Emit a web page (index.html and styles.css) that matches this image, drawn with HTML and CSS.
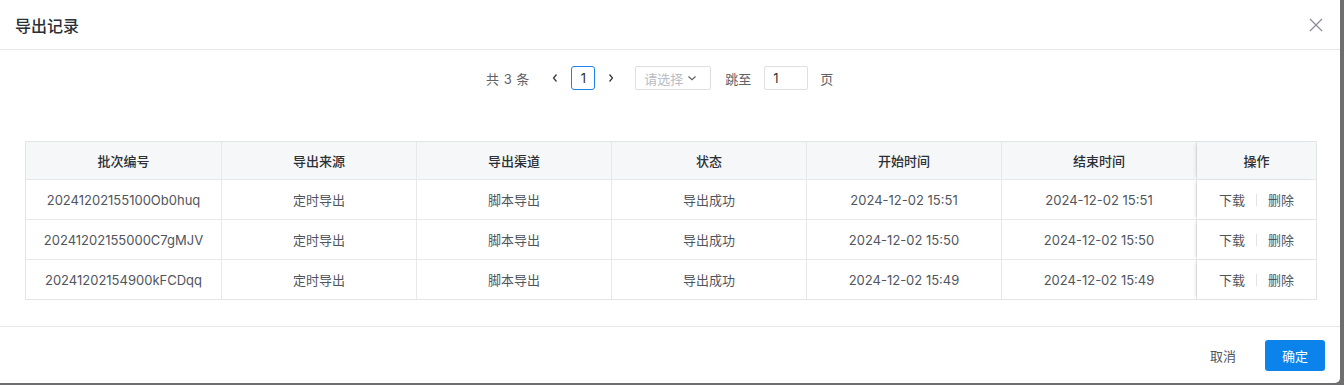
FILE: index.html
```html
<!DOCTYPE html>
<html lang="zh">
<head>
<meta charset="utf-8">
<link rel="stylesheet" href="styles.css">
</head>
<body>
<div class="dialog">
  <div class="dlg-header">
    <span class="dlg-title">导出记录</span>
    <svg class="close" width="14" height="14" viewBox="0 0 14 14"><path d="M1 1L13 13M13 1L1 13" stroke="#8a8f99" stroke-width="1.3" fill="none"/></svg>
  </div>
  <div class="dlg-body">
    <div class="pager">
      <span class="total">共 3 条</span>
      <svg class="arrow prev" width="8" height="10" viewBox="0 0 8 10"><path d="M5.5 1.5L2.5 5L5.5 8.5" stroke="#303133" stroke-width="1.2" fill="none"/></svg>
      <span class="page active">1</span>
      <svg class="arrow next" width="8" height="10" viewBox="0 0 8 10"><path d="M2.5 1.5L5.5 5L2.5 8.5" stroke="#303133" stroke-width="1.2" fill="none"/></svg>
      <span class="select"><span class="ph">请选择</span><svg width="10" height="8" viewBox="0 0 10 8"><path d="M1.5 2.5L5 5.8L8.5 2.5" stroke="#606266" stroke-width="1.2" fill="none"/></svg></span>
      <span class="jump">跳至</span>
      <span class="input">1</span>
      <span class="jump">页</span>
    </div>
    <div class="table">
      <div class="row head">
        <div class="cell">批次编号</div><div class="cell">导出来源</div><div class="cell">导出渠道</div><div class="cell">状态</div><div class="cell">开始时间</div><div class="cell">结束时间</div><div class="cell fixed">操作</div>
      </div>
      <div class="row">
        <div class="cell">20241202155100Ob0huq</div><div class="cell">定时导出</div><div class="cell">脚本导出</div><div class="cell">导出成功</div><div class="cell">2024-12-02 15:51</div><div class="cell">2024-12-02 15:51</div><div class="cell fixed"><span class="op">下载</span><span class="sep"></span><span class="op">删除</span></div>
      </div>
      <div class="row">
        <div class="cell">20241202155000C7gMJV</div><div class="cell">定时导出</div><div class="cell">脚本导出</div><div class="cell">导出成功</div><div class="cell">2024-12-02 15:50</div><div class="cell">2024-12-02 15:50</div><div class="cell fixed"><span class="op">下载</span><span class="sep"></span><span class="op">删除</span></div>
      </div>
      <div class="row last">
        <div class="cell">20241202154900kFCDqq</div><div class="cell">定时导出</div><div class="cell">脚本导出</div><div class="cell">导出成功</div><div class="cell">2024-12-02 15:49</div><div class="cell">2024-12-02 15:49</div><div class="cell fixed"><span class="op">下载</span><span class="sep"></span><span class="op">删除</span></div>
      </div>
    </div>
  </div>
  <div class="dlg-footer">
    <span class="btn-text">取消</span>
    <span class="btn-primary">确定</span>
  </div>
</div>
</body>
</html>
```

FILE: styles.css
```css
* { box-sizing: border-box; }
html, body { margin: 0; padding: 0; }
body {
  width: 1344px;
  height: 385px;
  background: #6e6e70;
  font-family: Inter, "Noto Sans CJK SC", sans-serif;
  font-size: 13px;
  color: #50555e;
  overflow: hidden;
}
.dialog {
  width: 1340px;
  height: 383px;
  background: #fff;
  border-radius: 0 0 5px 0;
  display: flex;
  flex-direction: column;
}
.dlg-header {
  height: 50px;
  border-bottom: 1px solid #e6e8eb;
  display: flex;
  align-items: center;
  justify-content: space-between;
  padding: 0 17px 0 15px;
}
.dlg-title {
  font-size: 16px;
  font-weight: 500;
  color: #2b2f36;
}
.close { display: block; }
.dlg-body {
  flex: 1;
  padding: 16px 23px 0 25px;
  border-bottom: 1px solid #e6e8eb;
}
.pager {
  display: flex;
  align-items: center;
  height: 24px;
  margin-bottom: 51px;
  color: #606266;
  padding-left: 461px;
}
.total { margin-right: 22px; word-spacing: 1px; }
.arrow { display: block; }
.page {
  width: 24px;
  height: 24px;
  border: 1px solid #1a82e8;
  border-radius: 3px;
  display: flex;
  align-items: center;
  justify-content: center;
  color: #303133;
  margin: 0 12px 0 12px;
  font-size: 13px;
}
.select {
  width: 76px;
  height: 24px;
  border: 1px solid #dcdfe6;
  border-radius: 2px;
  display: flex;
  align-items: center;
  padding: 0 8px;
  gap: 4px;
  margin-left: 20px;
  margin-right: 14px;
}
.ph { color: #b8bcc4; }
.jump { color: #606266; }
.input {
  width: 44px;
  height: 24px;
  border: 1px solid #dcdfe6;
  border-radius: 2px;
  display: flex;
  align-items: center;
  padding: 0 8px;
  color: #303133;
  margin: 0 12px 0 13px;
}
.table {
  width: 1292px;
  border: 1px solid #e3e5e8;
}
.row {
  display: flex;
  height: 40px;
  border-bottom: 1px solid #e6e8eb;
}
.row.head {
  height: 38px;
  background: #f6f7f8;
  color: #2b2f36;
  font-weight: 500;
}
.row.last { border-bottom: none; height: 39px; }
.cell {
  width: 195px;
  flex: none;
  display: flex;
  align-items: center;
  justify-content: center;
  border-right: 1px solid #e6e8eb;
}
.cell:first-child { width: 196px; }
.cell.fixed {
  width: 119px;
  border-right: none;
  box-shadow: -3px 0 4px -2px rgba(0,0,0,0.12);
  background: inherit;
}
.op { color: #50555e; }
.sep {
  width: 1px;
  height: 12px;
  background: #e0e2e6;
  margin: 0 11px;
}
.dlg-footer {
  height: 56px;
  display: flex;
  align-items: center;
  justify-content: flex-end;
  padding: 0 15px 0 0;
}
.btn-text {
  color: #50555e;
  margin-right: 29px;
}
.btn-primary {
  width: 60px;
  height: 31px;
  background: #0c83ea;
  color: #fff;
  border-radius: 3px;
  display: flex;
  align-items: center;
  justify-content: center;
}
```
